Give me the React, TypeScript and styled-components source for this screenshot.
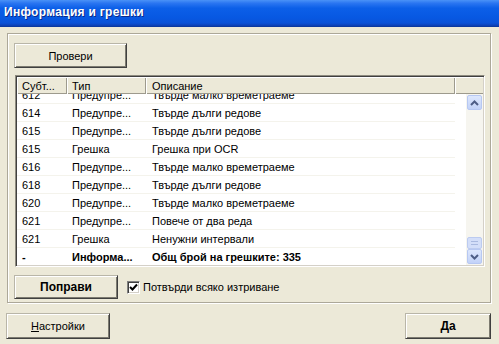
import React from 'react';
import styled, { createGlobalStyle } from 'styled-components';

const GlobalStyle = createGlobalStyle`
  html, body {
    margin: 0;
    padding: 0;
  }
  body {
    background: #ece9d8;
    font-family: "Liberation Sans", Arial, sans-serif;
    font-size: 11px;
    color: #000;
  }
`;

interface Row {
  sub: string;
  type: string;
  desc: string;
  bold?: boolean;
}

const rows: Row[] = [
  { sub: '612', type: 'Предупре...', desc: 'Твърде малко времетраеме' },
  { sub: '614', type: 'Предупре...', desc: 'Твърде дълги редове' },
  { sub: '615', type: 'Предупре...', desc: 'Твърде дълги редове' },
  { sub: '615', type: 'Грешка', desc: 'Грешка при OCR' },
  { sub: '616', type: 'Предупре...', desc: 'Твърде малко времетраеме' },
  { sub: '618', type: 'Предупре...', desc: 'Твърде дълги редове' },
  { sub: '620', type: 'Предупре...', desc: 'Твърде малко времетраеме' },
  { sub: '621', type: 'Предупре...', desc: 'Повече от два реда' },
  { sub: '621', type: 'Грешка', desc: 'Ненужни интервали' },
  { sub: '-', type: 'Информа...', desc: 'Общ брой на грешките: 335', bold: true },
];

const columns = [
  { title: 'Субт...', width: 50, pad: 5 },
  { title: 'Тип', width: 79, pad: 5 },
  { title: 'Описание', width: 309, pad: 6 },
];

const App = () => {
  return (
    <>
      <GlobalStyle />
      <Window>
        <TitleBar>
          <TitleText>Информация и грешки</TitleText>
        </TitleBar>

        <GroupBox>
          <Button width={113} height={25}>
            Провери
          </Button>

          <ListView>
            <HeaderRow>
              {columns.map((c) => (
                <HeaderCell key={c.title} width={c.width} pad={c.pad}>
                  {c.title}
                </HeaderCell>
              ))}
              <HeaderFiller />
            </HeaderRow>
            <ListBody>
              {/* scrolled to the end: first row sits partly under the header */}
              <RowsViewport>
                <RowsScroll>
                  {rows.map((r, i) => (
                    <ListRow key={i} bold={r.bold}>
                      <Cell width={columns[0].width} pad={columns[0].pad}>
                        {r.sub}
                      </Cell>
                      <Cell width={columns[1].width} pad={columns[1].pad}>
                        {r.type}
                      </Cell>
                      <Cell width={columns[2].width} pad={columns[2].pad}>
                        {r.desc}
                      </Cell>
                    </ListRow>
                  ))}
                </RowsScroll>
              </RowsViewport>
              <ScrollBar>
                <ArrowButton>
                  <svg width="9" height="6" viewBox="0 0 9 6">
                    <polyline
                      points="1,5 4.5,1.5 8,5"
                      fill="none"
                      stroke="#4d5d86"
                      strokeWidth="2"
                    />
                  </svg>
                </ArrowButton>
                <Track />
                <Thumb>
                  <Grip />
                  <Grip />
                </Thumb>
                <ArrowButton>
                  <svg width="9" height="6" viewBox="0 0 9 6">
                    <polyline
                      points="1,1 4.5,4.5 8,1"
                      fill="none"
                      stroke="#4d5d86"
                      strokeWidth="2"
                    />
                  </svg>
                </ArrowButton>
              </ScrollBar>
            </ListBody>
          </ListView>

          <ActionRow>
            <Button width={104} height={24} bold>
              Поправи
            </Button>
            <CheckLabel>
              <CheckBox>
                <svg width="9" height="9" viewBox="0 0 9 9">
                  <polyline
                    points="1,4 3.5,6.5 8,1.5"
                    fill="none"
                    stroke="#000"
                    strokeWidth="2"
                  />
                </svg>
              </CheckBox>
              Потвърди всяко изтриване
            </CheckLabel>
          </ActionRow>
        </GroupBox>

        <Footer>
          <Button width={104} height={26}>
            <u>Н</u>астройки
          </Button>
          <Button width={86} height={26} bold>
            Да
          </Button>
        </Footer>
      </Window>
    </>
  );
};

const Window = styled.div`
  width: 499px;
  height: 344px;
  overflow: hidden;
  display: flex;
  flex-direction: column;
  background: #ece9d8;
`;

const TitleBar = styled.div`
  height: 27px;
  box-sizing: border-box;
  padding: 0 0 3px 4px;
  display: flex;
  align-items: center;
  background: linear-gradient(
    to bottom,
    #4a92f7 0%,
    #2a75f1 12%,
    #0c5fe8 30%,
    #0758e2 65%,
    #0a52d8 85%,
    #0c44bd 93%,
    #0a3596 100%
  );
`;

const TitleText = styled.span`
  font-family: "Liberation Sans", Arial, sans-serif;
  font-weight: bold;
  font-size: 12px;
  color: #fff;
  text-shadow: 1px 1px 0 #0b2b8a;
  letter-spacing: 0.3px;
`;

const GroupBox = styled.div`
  margin: 6px 8px 0 7px;
  padding: 9px 6px 3px 6px;
  border: 1px solid #aca899;
  box-shadow: inset 1px 1px 0 #fff, 1px 1px 0 #fff;
  display: flex;
  flex-direction: column;
  align-items: flex-start;
`;

const Button = styled.div<{ width: number; height: number; bold?: boolean }>`
  width: ${({ width }) => width}px;
  height: ${({ height }) => height}px;
  box-sizing: border-box;
  display: flex;
  align-items: center;
  justify-content: center;
  background: #ece9d8;
  font-weight: ${({ bold }) => (bold ? 'bold' : 'normal')};
  font-size: ${({ bold }) => (bold ? '12px' : '11px')};
  border-top: 1px solid #b9b6a8;
  border-left: 1px solid #b9b6a8;
  border-right: 1px solid #404040;
  border-bottom: 1px solid #404040;
  box-shadow: inset 1px 1px 0 #fff, inset -1px -1px 0 #7d7b70;
  flex-shrink: 0;
`;

const ListView = styled.div`
  margin: 7px 0 0 1px;
  width: 470px;
  height: 192px;
  box-sizing: border-box;
  border-top: 1px solid #8e8b7f;
  border-left: 1px solid #8e8b7f;
  border-right: 1px solid #fff;
  border-bottom: 1px solid #fff;
  box-shadow: inset 1px 1px 0 #404040, inset -1px -1px 0 #d4d0c8;
  padding: 1px;
  display: flex;
  flex-direction: column;
  background: #fff;
`;

const HeaderRow = styled.div`
  height: 17px;
  display: flex;
  flex-shrink: 0;
`;

const HeaderCell = styled.div<{ width: number; pad: number }>`
  width: ${({ width }) => width}px;
  padding-left: ${({ pad }) => pad}px;
  box-sizing: border-box;
  display: flex;
  align-items: center;
  background: #ece9d8;
  box-shadow: inset 1px 1px 0 #fff, inset -1px -1px 0 #9d9a8d;
  white-space: nowrap;
`;

const HeaderFiller = styled.div`
  flex: 1;
  background: #ece9d8;
  box-shadow: inset 1px 1px 0 #fff, inset 0 -1px 0 #9d9a8d;
`;

const ListBody = styled.div`
  flex: 1;
  display: flex;
  min-height: 0;
`;

const RowsViewport = styled.div`
  flex: 1;
  overflow: hidden;
  background: #fff;
`;

const RowsScroll = styled.div`
  margin-top: -8px;
`;

const ListRow = styled.div<{ bold?: boolean }>`
  height: 18px;
  box-sizing: border-box;
  display: flex;
  align-items: center;
  width: 438px;
  border-bottom: 1px solid #f4f3ec;
  font-weight: ${({ bold }) => (bold ? 'bold' : 'normal')};
`;

const Cell = styled.div<{ width: number; pad: number }>`
  width: ${({ width }) => width}px;
  padding-left: ${({ pad }) => pad}px;
  box-sizing: border-box;
  white-space: nowrap;
  overflow: hidden;
`;

const ScrollBar = styled.div`
  width: 17px;
  display: flex;
  flex-direction: column;
  background: #f6f5ef;
  padding: 1px 0;
  box-sizing: border-box;
`;

const ArrowButton = styled.div`
  width: 15px;
  height: 15px;
  margin-left: 1px;
  box-sizing: border-box;
  border: 1px solid #b7c8f2;
  border-radius: 2px;
  background: linear-gradient(to bottom, #dde7fd, #c2d2f8);
  display: flex;
  align-items: center;
  justify-content: center;
`;

const Track = styled.div`
  flex: 1;
`;

const Thumb = styled.div`
  width: 15px;
  height: 12px;
  margin-left: 1px;
  box-sizing: border-box;
  border: 1px solid #bccbf0;
  border-radius: 2px;
  background: #d3def9;
  display: flex;
  flex-direction: column;
  align-items: center;
  justify-content: center;
  gap: 2px;
`;

const Grip = styled.div`
  width: 7px;
  height: 1px;
  background: #a9b9e0;
`;

const ActionRow = styled.div`
  margin-top: 8px;
  display: flex;
  align-items: center;
`;

const CheckLabel = styled.div`
  margin-left: 9px;
  display: flex;
  align-items: center;
  gap: 3px;
  white-space: nowrap;
`;

const CheckBox = styled.div`
  width: 13px;
  height: 13px;
  box-sizing: border-box;
  border-top: 1px solid #808080;
  border-left: 1px solid #808080;
  border-right: 1px solid #fff;
  border-bottom: 1px solid #fff;
  box-shadow: inset 1px 1px 0 #404040, inset -1px -1px 0 #d4d0c8;
  background: #fff;
  display: flex;
  align-items: center;
  justify-content: center;
`;

const Footer = styled.div`
  margin-top: 10px;
  padding: 0 8px 0 6px;
  display: flex;
  justify-content: space-between;
`;

export default App;
